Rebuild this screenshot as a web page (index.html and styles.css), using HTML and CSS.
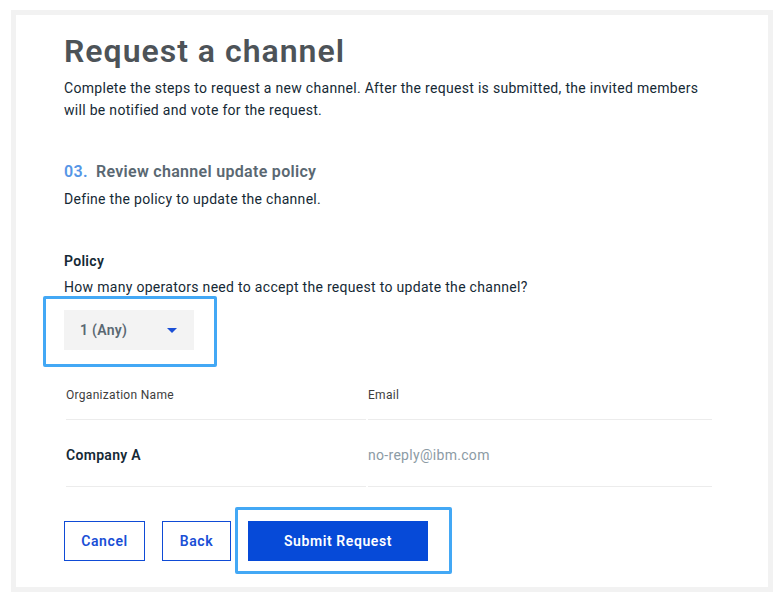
FILE: index.html
```html
<!DOCTYPE html>
<html lang="en">
<head>
<meta charset="utf-8">
<title>Request a channel</title>
<link rel="stylesheet" href="styles.css">
</head>
<body>
<div class="frame">
  <main class="panel">
    <h1 class="title">Request a channel</h1>
    <p class="desc">Complete the steps to request a new channel. After the request is submitted, the invited members will be notified and vote for the request.</p>

    <h2 class="step"><span class="step-num">03.</span> Review channel update policy</h2>
    <p class="step-desc">Define the policy to update the channel.</p>

    <h3 class="label">Policy</h3>
    <p class="helper">How many operators need to accept the request to update the channel?</p>

    <div class="select-wrap">
      <div class="select">
        <span class="select-value">1 (Any)</span>
        <svg class="caret" width="10" height="5" viewBox="0 0 10 5"><path d="M0 0h10L5 5z" fill="#1a4fd6"/></svg>
      </div>
      <span class="highlight hl-select"></span>
    </div>

    <div class="table">
      <div class="th">Organization Name</div>
      <div class="th">Email</div>
      <div class="td td-name">Company A</div>
      <div class="td td-email">no-reply@ibm.com</div>
    </div>

    <div class="actions">
      <button class="btn btn-secondary btn-cancel">Cancel</button>
      <button class="btn btn-secondary btn-back">Back</button>
      <div class="submit-wrap">
        <button class="btn btn-primary">Submit Request</button>
        <span class="highlight hl-submit"></span>
      </div>
    </div>
  </main>
</div>
</body>
</html>
```
FILE: styles.css
```css
* { box-sizing: border-box; }

html, body {
  margin: 0;
  padding: 0;
  background: #ffffff;
}

body {
  font-family: Roboto, "Liberation Sans", sans-serif;
  color: #152935;
  letter-spacing: 0.3px;
}

.frame {
  margin: 10px 11px 8px 11px;
  width: 762px;
  height: 582px;
  border: 5px solid #f2f2f2;
}

.panel {
  padding: 16px 48px 0 48px;
}

.title {
  margin: 0;
  font-size: 32px;
  line-height: 40px;
  font-weight: 600;
  letter-spacing: 1px;
  color: #4d5358;
}

.desc {
  margin: 6px 0 0;
  font-size: 14px;
  line-height: 22px;
  width: 640px;
}

.step {
  margin: 39px 0 0;
  font-size: 16px;
  line-height: 24px;
  font-weight: 600;
  color: #5a6872;
}

.step-num {
  color: #5596e6;
  margin-right: 4px;
}

.step-desc {
  margin: 4px 0 0;
  font-size: 14px;
  line-height: 22px;
}

.label {
  margin: 40px 0 0;
  font-size: 14px;
  line-height: 22px;
  font-weight: 600;
}

.helper {
  margin: 4px 0 0;
  font-size: 14px;
  line-height: 22px;
}

.select-wrap {
  position: relative;
  width: 130px;
  margin-top: 12px;
}

.select {
  height: 40px;
  background: #f3f3f3;
  display: flex;
  align-items: center;
  justify-content: space-between;
  padding: 0 17px 0 16px;
}

.select-value {
  font-size: 14px;
  font-weight: 600;
  color: #5a6872;
}

.highlight {
  position: absolute;
  border: 3px solid #43a8f5;
  border-radius: 2px;
  pointer-events: none;
}

.hl-select {
  left: -21px;
  top: -14px;
  width: 174px;
  height: 71px;
}

.table {
  display: grid;
  grid-template-columns: 300px 344px;
  column-gap: 2px;
  margin: 21px 0 0 2px;
}

.th {
  height: 49px;
  display: flex;
  align-items: center;
  font-size: 12px;
  color: #3d3d3d;
  border-bottom: 1px solid #ececec;
}

.td {
  height: 67px;
  display: flex;
  align-items: center;
  padding-top: 3px;
  font-size: 14px;
  border-bottom: 1px solid #ececec;
}

.td-name {
  font-weight: 600;
  color: #152935;
}

.td-email {
  color: #8c9ba5;
}

.actions {
  display: flex;
  align-items: center;
  margin-top: 34px;
}

.btn {
  height: 40px;
  font-family: Roboto, "Liberation Sans", sans-serif;
  font-size: 14px;
  font-weight: 600;
  letter-spacing: 0.6px;
  border-radius: 0;
  cursor: pointer;
  padding: 0;
}

.btn-secondary {
  background: #ffffff;
  border: 1px solid #0f4bd6;
  color: #1a4fd6;
  margin-right: 17px;
}

.btn-cancel {
  width: 81px;
}

.btn-back {
  width: 69px;
}

.submit-wrap {
  position: relative;
}

.btn-primary {
  background: #064ad8;
  border: none;
  color: #ffffff;
  width: 180px;
  display: block;
}

.hl-submit {
  left: -13px;
  top: -14px;
  width: 217px;
  height: 67px;
}
```
